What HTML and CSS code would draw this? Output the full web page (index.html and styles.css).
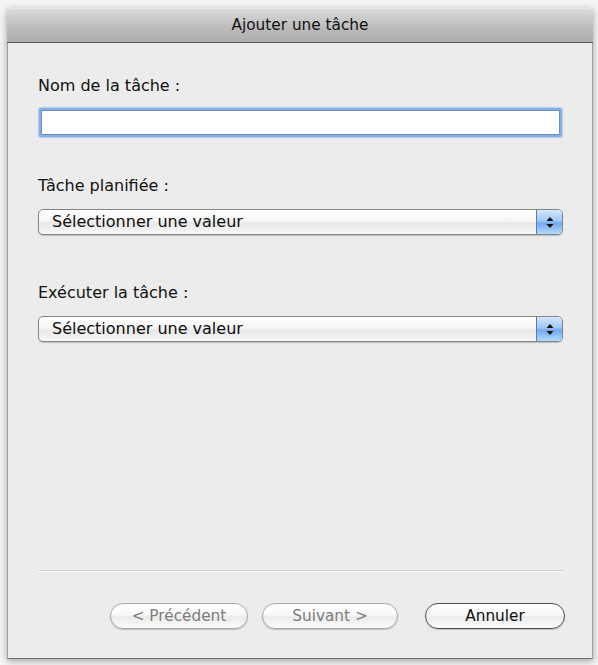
FILE: index.html
```html
<!DOCTYPE html>
<html lang="fr">
<head>
<meta charset="utf-8">
<title>Ajouter une tâche</title>
<link rel="stylesheet" href="styles.css">
</head>
<body>
<div class="window">
  <div class="titlebar">Ajouter une tâche</div>
  <div class="content">
    <div class="field field-name">
      <label class="label" for="nom">Nom de la tâche :</label>
      <input class="textbox" id="nom" type="text">
    </div>
    <div class="field field-plan">
      <div class="label">Tâche planifiée :</div>
      <div class="popup">
        <span class="popup-text">Sélectionner une valeur</span>
        <span class="popup-arrows">
          <svg width="8" height="13" viewBox="0 0 8 13"><path d="M4 1 L7.5 5 L0.5 5 Z" fill="#111"/><path d="M4 12 L7.5 8 L0.5 8 Z" fill="#111"/></svg>
        </span>
      </div>
    </div>
    <div class="field field-exec">
      <div class="label">Exécuter la tâche :</div>
      <div class="popup">
        <span class="popup-text">Sélectionner une valeur</span>
        <span class="popup-arrows">
          <svg width="8" height="13" viewBox="0 0 8 13"><path d="M4 1 L7.5 5 L0.5 5 Z" fill="#111"/><path d="M4 12 L7.5 8 L0.5 8 Z" fill="#111"/></svg>
        </span>
      </div>
    </div>
    <div class="spacer"></div>
    <div class="separator"></div>
    <div class="buttons">
      <button class="btn btn-disabled btn-prev">&lt; Précédent</button>
      <button class="btn btn-disabled btn-next">Suivant &gt;</button>
      <button class="btn btn-cancel">Annuler</button>
    </div>
  </div>
</div>
</body>
</html>
```

FILE: styles.css
```css
html, body {
  margin: 0;
  padding: 0;
}
body {
  background: #f4f4f4;
  width: 598px;
  height: 665px;
  overflow: hidden;
  font-family: "DejaVu Sans", "Liberation Sans", sans-serif;
}
.window {
  margin: 8px 0 0 7px;
  width: 586px;
  height: 651px;
  box-sizing: border-box;
  display: flex;
  flex-direction: column;
  background: #ececec;
  border-left: 1px solid #a2a2a2;
  border-right: 1px solid #a2a2a2;
  border-bottom: 1px solid #6f6f6f;
  box-shadow: 0 2px 7px rgba(0, 0, 0, 0.35);
  border-radius: 4px 4px 0 0;
}
.titlebar {
  height: 35px;
  box-sizing: border-box;
  margin: 0 -1px;
  border-radius: 4px 4px 0 0;
  background: linear-gradient(#dadada, #bababa 60%, #adadad);
  border-top: 1px solid #e6e6e6;
  border-bottom: 1px solid #5a5a5a;
  text-align: center;
  font-size: 15.3px;
  line-height: 33px;
  color: #111;
}
.content {
  flex: 1;
  display: flex;
  flex-direction: column;
  padding: 0 29px 0 30px;
}
.field {
  display: flex;
  flex-direction: column;
}
.label {
  font-size: 16px;
  line-height: 20px;
  color: #111;
}
.field-name {
  padding-top: 33px;
}
.field-plan {
  padding-top: 41px;
}
.field-exec {
  padding-top: 48px;
}
.textbox {
  margin: 14px 3px 0 3px;
  height: 25px;
  box-sizing: border-box;
  border: 1px solid #6d8fbf;
  background: #fff;
  border-radius: 1px;
  box-shadow: 0 0 0 2px #86afe3, 0 0 1px 3px #b4cff0;
  outline: none;
  font: inherit;
  padding: 0 4px;
}
.popup {
  margin-top: 13px;
  height: 26px;
  box-sizing: border-box;
  border: 1px solid #858585;
  border-radius: 5px;
  display: flex;
  align-items: stretch;
  background: linear-gradient(#ffffff, #f6f6f6 45%, #e8e8e8 55%, #f8f8f8);
  box-shadow: 0 1px 1px rgba(0, 0, 0, 0.2);
  overflow: hidden;
}
.popup-text {
  flex: 1;
  padding-left: 13px;
  font-size: 16px;
  line-height: 24px;
  color: #0d0d0d;
}
.popup-arrows {
  width: 25px;
  display: flex;
  align-items: center;
  justify-content: center;
  border-left: 1px solid #5a7cb4;
  background: linear-gradient(#d4e7fc, #a0c8f4 45%, #72aaee 55%, #b3dafb);
}
.spacer {
  flex: 1;
}
.separator {
  height: 1px;
  background: #d3d3d3;
  border-bottom: 1px solid #f7f7f7;
}
.buttons {
  display: flex;
  justify-content: flex-end;
  margin-top: 31px;
  margin-bottom: 29px;
  margin-right: -2px;
}
.btn {
  height: 26px;
  box-sizing: border-box;
  border-radius: 13px;
  font-family: "DejaVu Sans", "Liberation Sans", sans-serif;
  font-size: 15.3px;
  line-height: 22px;
  padding: 0;
  background: linear-gradient(#ffffff, #f8f8f8 45%, #ebebeb 55%, #fbfbfb);
  box-shadow: 0 1px 1px rgba(0, 0, 0, 0.2);
}
.btn-disabled {
  border: 1px solid #a8a8a8;
  color: #7c7c7c;
}
.btn-prev {
  width: 138px;
}
.btn-next {
  width: 136px;
  margin-left: 14px;
}
.btn-cancel {
  width: 140px;
  margin-left: 27px;
  border: 1px solid #4f4f4f;
  color: #0d0d0d;
}
```
